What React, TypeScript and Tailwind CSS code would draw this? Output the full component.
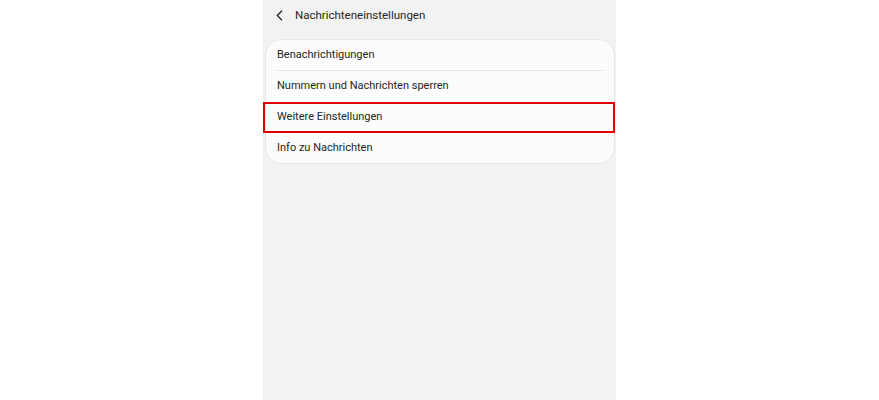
import React from "react";

const rows = [
  "Benachrichtigungen",
  "Nummern und Nachrichten sperren",
  "Weitere Einstellungen",
  "Info zu Nachrichten",
];

export default function App() {
  return (
    <div className="w-[879px] h-[400px] bg-white flex justify-center" style={{ fontFamily: "Roboto, 'Noto Sans', sans-serif" }}>
      <div className="w-[353px] h-[400px] bg-[#f2f2f2] flex flex-col">
        <div className="h-[31px] flex items-center pl-[13px] text-[#222] gap-[12px]">
          <svg width="7" height="11" viewBox="0 0 7 11" fill="none">
            <path d="M6 0.8 L1.3 5.5 L6 10.2" stroke="#222" strokeWidth="1.3" />
          </svg>
          <span className="text-[11.5px] text-[#252525]">Nachrichteneinstellungen</span>
        </div>
        <div className="mt-[8px] ml-[2px] mr-[1px] bg-[#fcfcfc] rounded-[16px] border border-[#e6e6e6] relative">
          {rows.map((r, i) => (
            <div key={r} className={`relative flex items-center px-[11px] ${i === 3 ? "h-[30px]" : "h-[31px]"}`}>
              <span className="text-[11px] text-[#252525]">{r}</span>
              {i === 0 && (
                <div className="absolute left-[10px] right-[10px] bottom-[0px] h-px bg-[#e8e8e8]" />
              )}
              {i === 2 && (
                <div className="absolute left-[-3px] right-[-1px] top-[0px] h-[31px] border-2 border-[#e00000]" />
              )}
            </div>
          ))}
        </div>
      </div>
    </div>
  );
}
